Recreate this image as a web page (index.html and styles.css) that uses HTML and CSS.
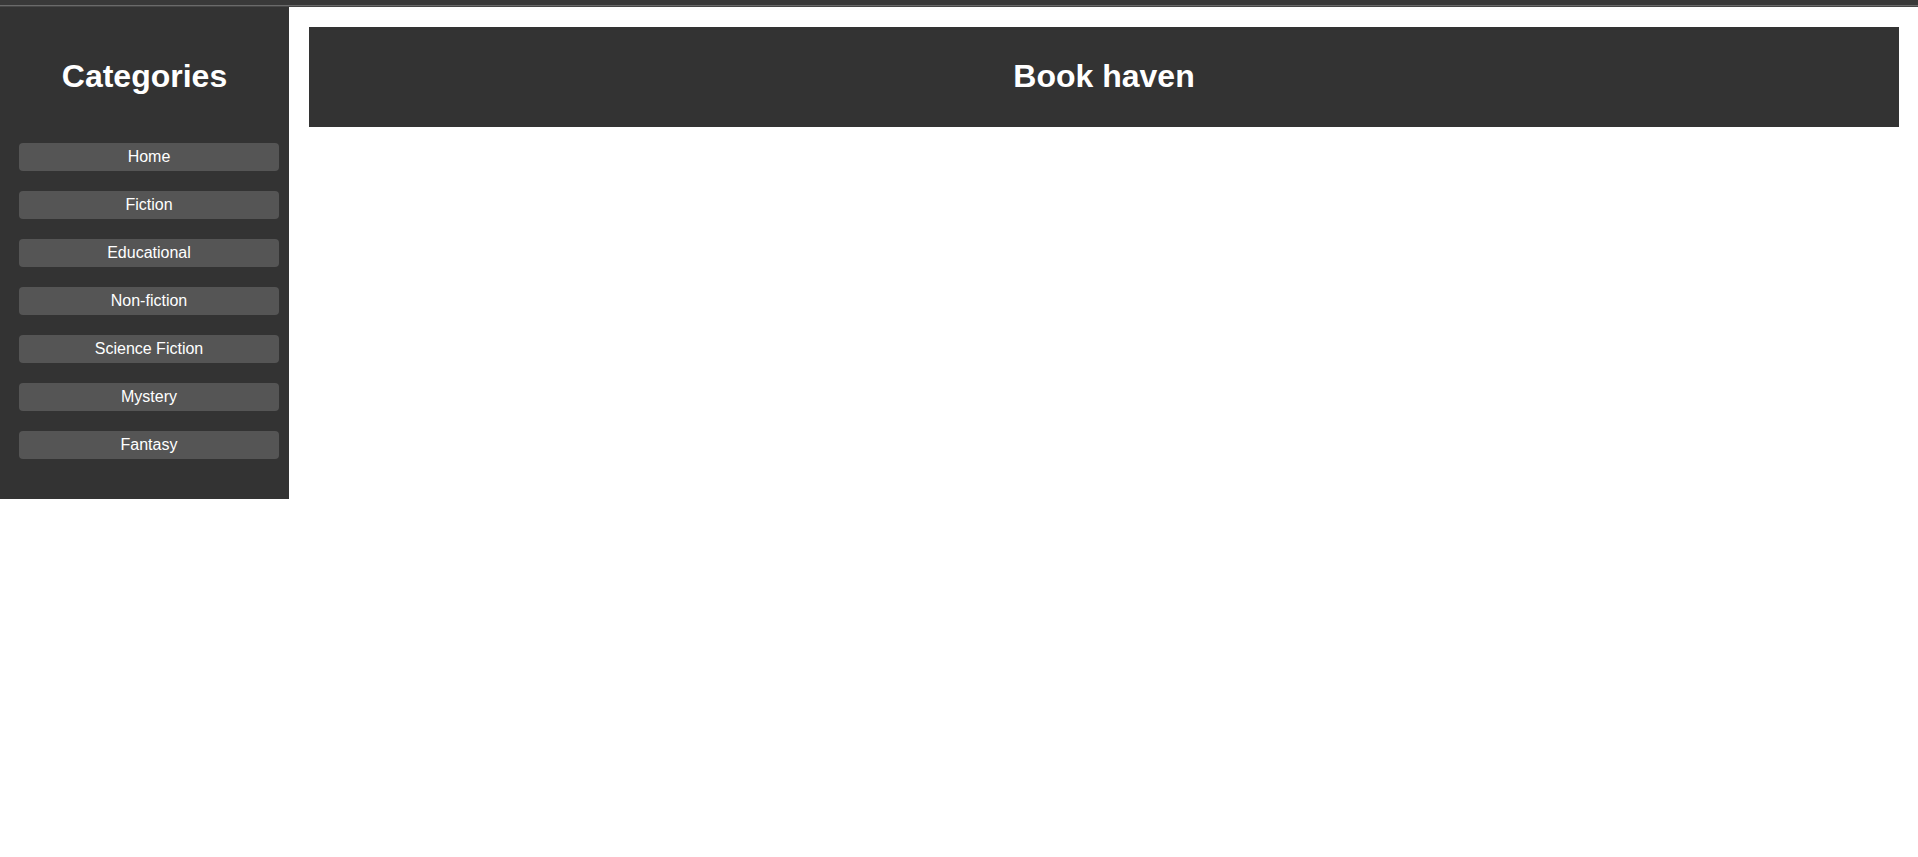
FILE: index.html
```html
<!DOCTYPE html>
<html lang="en">
<head>
<meta charset="utf-8">
<title>Book haven</title>
<link rel="stylesheet" href="styles.css">
</head>
<body>
<div class="topstrip"></div>
<div class="layout">
  <aside class="sidebar">
    <h1 class="sidebar-title">Categories</h1>
    <nav class="nav">
      <a class="nav-btn" href="#">Home</a>
      <a class="nav-btn" href="#">Fiction</a>
      <a class="nav-btn" href="#">Educational</a>
      <a class="nav-btn" href="#">Non-fiction</a>
      <a class="nav-btn" href="#">Science Fiction</a>
      <a class="nav-btn" href="#">Mystery</a>
      <a class="nav-btn" href="#">Fantasy</a>
    </nav>
  </aside>
  <main class="main">
    <header class="header">
      <h1 class="header-title">Book haven</h1>
    </header>
  </main>
</div>
</body>
</html>
```
FILE: styles.css
```css
html, body {
  margin: 0;
  padding: 0;
  background: #ffffff;
  font-family: "Liberation Sans", Arial, sans-serif;
}

.topstrip {
  height: 5px;
  background: #393939;
  border-bottom: 1px solid #6a6a6a;
  box-shadow: 0 1px 0 #474747;
  margin-bottom: 1px;
}

.layout {
  display: flex;
  align-items: flex-start;
}

.sidebar {
  width: 289px;
  flex: 0 0 289px;
  background: #333333;
  padding: 51px 0 40px;
  box-sizing: border-box;
}

.sidebar-title {
  margin: 0;
  font-size: 32px;
  line-height: 37px;
  font-weight: bold;
  color: #ffffff;
  text-align: center;
}

.nav {
  display: flex;
  flex-direction: column;
  gap: 20px;
  padding: 48px 10px 0 19px;
}

.nav-btn {
  display: block;
  height: 28px;
  line-height: 28px;
  background: #555555;
  border-radius: 4px;
  color: #ffffff;
  text-decoration: none;
  text-align: center;
  font-size: 16px;
}

.main {
  flex: 1;
  padding: 20px 19px 20px 20px;
}

.header {
  height: 100px;
  box-sizing: border-box;
  padding-top: 31px;
  background: #333333;
}

.header-title {
  margin: 0;
  font-size: 32px;
  line-height: 37px;
  font-weight: bold;
  color: #ffffff;
  text-align: center;
}
```
